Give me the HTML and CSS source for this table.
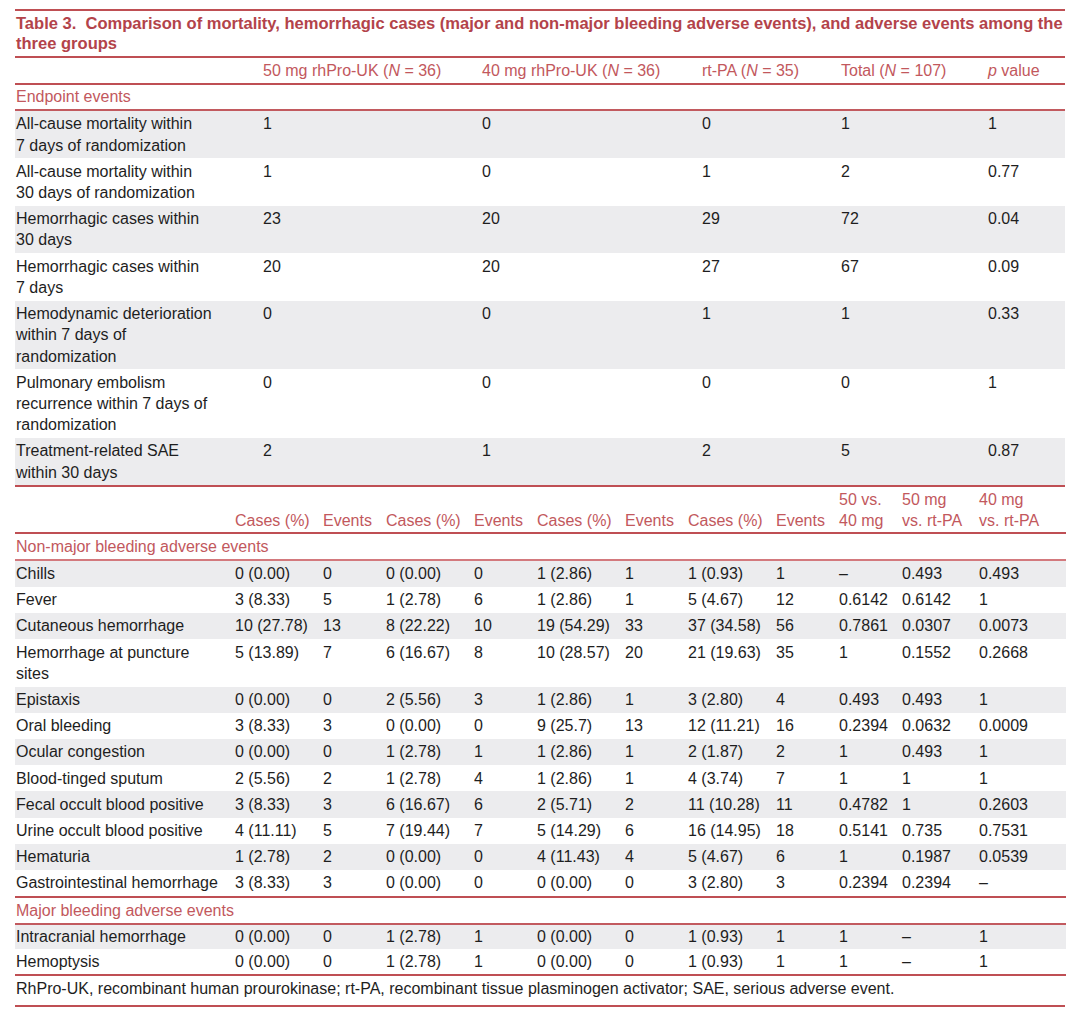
FILE: index.html
```html
<!DOCTYPE html>
<html lang="en">
<head>
<meta charset="utf-8">
<title>Table 3</title>
<link rel="stylesheet" href="styles.css">
</head>
<body>
<div class="wrap">
  <div class="title"><span class="l1">Table 3.&nbsp; Comparison of mortality, hemorrhagic cases (major and non-major bleeding adverse events), and adverse events among the</span><br>three groups</div>

  <table class="t1">
    <colgroup>
      <col class="c1a"><col class="c1b"><col class="c1c"><col class="c1d"><col class="c1e"><col class="c1f">
    </colgroup>
    <tr class="hdr">
      <td></td>
      <td>50 mg rhPro-UK (<i>N</i> = 36)</td>
      <td>40 mg rhPro-UK (<i>N</i> = 36)</td>
      <td>rt-PA (<i>N</i> = 35)</td>
      <td>Total (<i>N</i> = 107)</td>
      <td><i>p</i> value</td>
    </tr>
    <tr class="sec"><td colspan="6">Endpoint events</td></tr>
    <tr class="g"><td>All-cause mortality within<br>7 days of randomization</td><td>1</td><td>0</td><td>0</td><td>1</td><td>1</td></tr>
    <tr><td>All-cause mortality within<br>30 days of randomization</td><td>1</td><td>0</td><td>1</td><td>2</td><td>0.77</td></tr>
    <tr class="g"><td>Hemorrhagic cases within<br>30 days</td><td>23</td><td>20</td><td>29</td><td>72</td><td>0.04</td></tr>
    <tr><td>Hemorrhagic cases within<br>7 days</td><td>20</td><td>20</td><td>27</td><td>67</td><td>0.09</td></tr>
    <tr class="g"><td>Hemodynamic deterioration<br>within 7 days of<br>randomization</td><td>0</td><td>0</td><td>1</td><td>1</td><td>0.33</td></tr>
    <tr><td>Pulmonary embolism<br>recurrence within 7 days of<br>randomization</td><td>0</td><td>0</td><td>0</td><td>0</td><td>1</td></tr>
    <tr class="g last"><td>Treatment-related SAE<br>within 30 days</td><td>2</td><td>1</td><td>2</td><td>5</td><td>0.87</td></tr>
  </table>

  <table class="t2">
    <colgroup>
      <col class="c2a"><col class="c2n"><col class="c2e"><col class="c2n"><col class="c2e"><col class="c2n"><col class="c2e"><col class="c2n"><col class="c2e"><col class="c2p1"><col class="c2p2"><col class="c2p3">
    </colgroup>
    <tr class="hdr hdr2">
      <td></td>
      <td>Cases (%)</td><td>Events</td>
      <td>Cases (%)</td><td>Events</td>
      <td>Cases (%)</td><td>Events</td>
      <td>Cases (%)</td><td>Events</td>
      <td>50 vs.<br>40 mg</td>
      <td>50 mg<br>vs. rt-PA</td>
      <td>40 mg<br>vs. rt-PA</td>
    </tr>
    <tr class="sec light"><td colspan="12">Non-major bleeding adverse events</td></tr>
    <tr class="g"><td>Chills</td><td>0 (0.00)</td><td>0</td><td>0 (0.00)</td><td>0</td><td>1 (2.86)</td><td>1</td><td>1 (0.93)</td><td>1</td><td>–</td><td>0.493</td><td>0.493</td></tr>
    <tr><td>Fever</td><td>3 (8.33)</td><td>5</td><td>1 (2.78)</td><td>6</td><td>1 (2.86)</td><td>1</td><td>5 (4.67)</td><td>12</td><td>0.6142</td><td>0.6142</td><td>1</td></tr>
    <tr class="g"><td>Cutaneous hemorrhage</td><td>10 (27.78)</td><td>13</td><td>8 (22.22)</td><td>10</td><td>19 (54.29)</td><td>33</td><td>37 (34.58)</td><td>56</td><td>0.7861</td><td>0.0307</td><td>0.0073</td></tr>
    <tr><td>Hemorrhage at puncture<br>sites</td><td>5 (13.89)</td><td>7</td><td>6 (16.67)</td><td>8</td><td>10 (28.57)</td><td>20</td><td>21 (19.63)</td><td>35</td><td>1</td><td>0.1552</td><td>0.2668</td></tr>
    <tr class="g"><td>Epistaxis</td><td>0 (0.00)</td><td>0</td><td>2 (5.56)</td><td>3</td><td>1 (2.86)</td><td>1</td><td>3 (2.80)</td><td>4</td><td>0.493</td><td>0.493</td><td>1</td></tr>
    <tr><td>Oral bleeding</td><td>3 (8.33)</td><td>3</td><td>0 (0.00)</td><td>0</td><td>9 (25.7)</td><td>13</td><td>12 (11.21)</td><td>16</td><td>0.2394</td><td>0.0632</td><td>0.0009</td></tr>
    <tr class="g"><td>Ocular congestion</td><td>0 (0.00)</td><td>0</td><td>1 (2.78)</td><td>1</td><td>1 (2.86)</td><td>1</td><td>2 (1.87)</td><td>2</td><td>1</td><td>0.493</td><td>1</td></tr>
    <tr><td>Blood-tinged sputum</td><td>2 (5.56)</td><td>2</td><td>1 (2.78)</td><td>4</td><td>1 (2.86)</td><td>1</td><td>4 (3.74)</td><td>7</td><td>1</td><td>1</td><td>1</td></tr>
    <tr class="g"><td>Fecal occult blood positive</td><td>3 (8.33)</td><td>3</td><td>6 (16.67)</td><td>6</td><td>2 (5.71)</td><td>2</td><td>11 (10.28)</td><td>11</td><td>0.4782</td><td>1</td><td>0.2603</td></tr>
    <tr><td>Urine occult blood positive</td><td>4 (11.11)</td><td>5</td><td>7 (19.44)</td><td>7</td><td>5 (14.29)</td><td>6</td><td>16 (14.95)</td><td>18</td><td>0.5141</td><td>0.735</td><td>0.7531</td></tr>
    <tr class="g"><td>Hematuria</td><td>1 (2.78)</td><td>2</td><td>0 (0.00)</td><td>0</td><td>4 (11.43)</td><td>4</td><td>5 (4.67)</td><td>6</td><td>1</td><td>0.1987</td><td>0.0539</td></tr>
    <tr class="last"><td>Gastrointestinal hemorrhage</td><td>3 (8.33)</td><td>3</td><td>0 (0.00)</td><td>0</td><td>0 (0.00)</td><td>0</td><td>3 (2.80)</td><td>3</td><td>0.2394</td><td>0.2394</td><td>–</td></tr>
    <tr class="sec"><td colspan="12">Major bleeding adverse events</td></tr>
    <tr class="g tight"><td>Intracranial hemorrhage</td><td>0 (0.00)</td><td>0</td><td>1 (2.78)</td><td>1</td><td>0 (0.00)</td><td>0</td><td>1 (0.93)</td><td>1</td><td>1</td><td>–</td><td>1</td></tr>
    <tr class="tight last"><td>Hemoptysis</td><td>0 (0.00)</td><td>0</td><td>1 (2.78)</td><td>1</td><td>0 (0.00)</td><td>0</td><td>1 (0.93)</td><td>1</td><td>1</td><td>–</td><td>1</td></tr>
  </table>

  <div class="foot">RhPro-UK, recombinant human prourokinase; rt-PA, recombinant tissue plasminogen activator; SAE, serious adverse event.</div>
</div>
</body>
</html>
```

FILE: styles.css
```css
html, body {
  margin: 0;
  padding: 0;
  background: #ffffff;
}

body {
  font-family: "Liberation Sans", Arial, Helvetica, sans-serif;
  color: #1e1e1e;
  font-size: 16px;
}

.wrap {
  width: 1050px;
  margin: 0 0 0 15px;
  padding-top: 9px;
}

.title {
  border-top: 2px solid #bf4f54;
  border-bottom: 2px solid #bf4f54;
  padding: 3px 0 2px 1px;
  font-size: 16.55px;
  line-height: 20px;
  font-weight: bold;
  color: #b3434a;
}

.title .l1 {
  white-space: nowrap;
}

table {
  width: 1050px;
  table-layout: fixed;
  border-collapse: collapse;
  border-spacing: 0;
}

td {
  padding: 2.5px 0 2.5px 0;
  line-height: 21.2px;
  vertical-align: top;
  text-align: left;
  white-space: nowrap;
}

td:first-child {
  padding-left: 1px;
}

.c1a { width: 248px; }
.c1b { width: 219px; }
.c1c { width: 220px; }
.c1d { width: 139px; }
.c1e { width: 147px; }
.c1f { width: 77px; }

.c2a { width: 220px; }
.c2n { width: 88px; }
.c2e { width: 63px; }
.c2p1 { width: 63px; }
.c2p2 { width: 77px; }
.c2p3 { width: 87px; }

.hdr td {
  color: #c2585d;
  padding-top: 1.7px;
  padding-bottom: 1.7px;
  border-bottom: 2px solid #bf4f54;
}

.hdr2 td {
  vertical-align: bottom;
  padding-top: 1.5px;
  padding-bottom: 1px;
}

.sec td {
  color: #c2585d;
  padding-top: 1.7px;
  padding-bottom: 1.5px;
  border-bottom: 2px solid #c25a5f;
}

.sec.light td {
  border-bottom-color: #d3797d;
}

.g td {
  background: #ececee;
}

.last td {
  border-bottom: 2px solid #bf4f54;
}

.tight td {
  padding-top: 1.8px;
  padding-bottom: 1.8px;
}

.foot {
  padding: 2px 0 6px 1px;
  line-height: 21.2px;
  border-bottom: 2px solid #bf4f54;
  font-size: 16px;
  color: #1e1e1e;
}
```
